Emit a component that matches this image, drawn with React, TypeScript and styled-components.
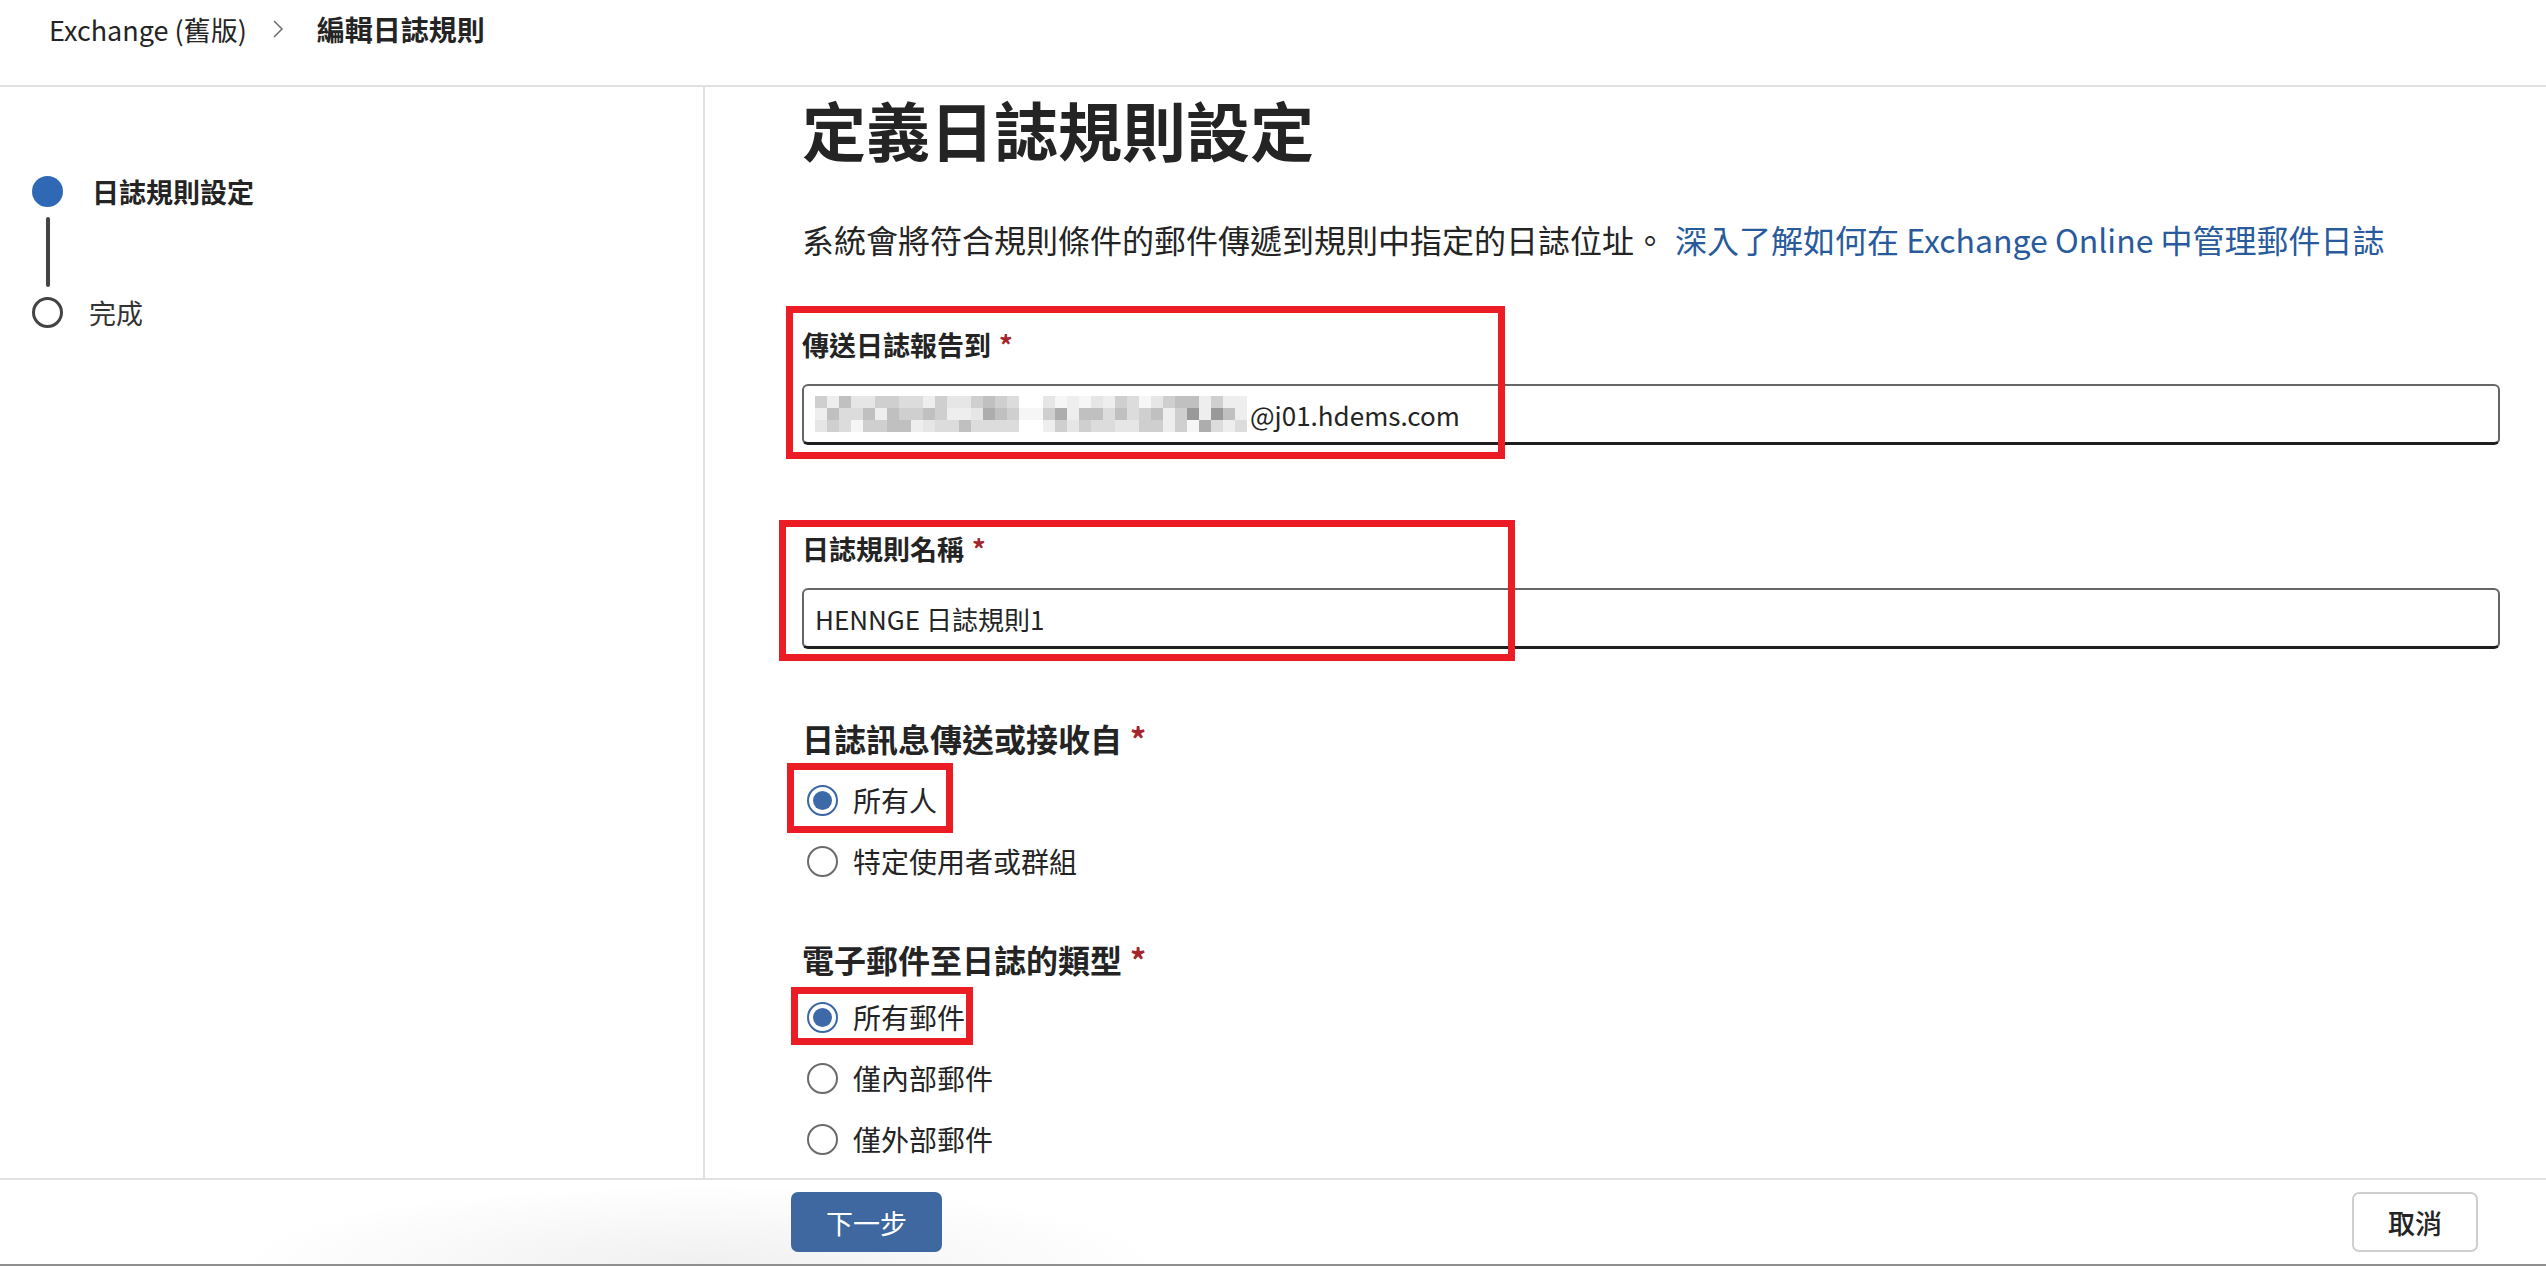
import React from 'react'
import styled, { createGlobalStyle } from 'styled-components'

const GlobalStyle = createGlobalStyle`
  html, body {
    margin: 0;
    padding: 0;
    background: #fff;
  }
  body {
    font-family: "Noto Sans CJK TC", "Noto Sans", sans-serif;
    color: #242424;
    overflow: hidden;
  }
  * {
    box-sizing: border-box;
  }
`

const Page = styled.div`
  height: 100vh;
  display: flex;
  flex-direction: column;
  border-bottom: 2px solid #8f8f8f;
`

/* ---------- header ---------- */

const Header = styled.header`
  height: 87px;
  flex-shrink: 0;
  border-bottom: 2px solid #e1e1e1;
  padding-left: 49px;
`

const Crumbs = styled.nav`
  height: 58px;
  display: flex;
  align-items: center;
  font-size: 27px;
`

const Crumb = styled.span<{ $current?: boolean }>`
  font-weight: ${({ $current }) => ($current ? 700 : 400)};
  font-size: ${({ $current }) => ($current ? '28px' : 'inherit')};
  color: #242424;
`

const Chevron = styled.svg`
  margin: 0 33px 0 25px;
  width: 12px;
  height: 20px;
`

/* ---------- wizard steps ---------- */

const Body = styled.div`
  flex: 1;
  display: flex;
  min-height: 0;
`

const Sidebar = styled.aside`
  width: 705px;
  flex-shrink: 0;
  border-right: 2px solid #e1e1e1;
  padding: 89px 0 0 32px;
  display: flex;
  flex-direction: column;
`

const Step = styled.div`
  display: flex;
  align-items: center;
  height: 31px;
`

const StepDot = styled.span<{ $active?: boolean }>`
  width: 31px;
  height: 31px;
  border-radius: 50%;
  flex-shrink: 0;
  background: ${({ $active }) => ($active ? '#2f68b5' : '#fff')};
  border: ${({ $active }) => ($active ? 'none' : '3.5px solid #444')};
`

const StepLabel = styled.span<{ $active?: boolean }>`
  margin-left: ${({ $active }) => ($active ? '29px' : '26px')};
  font-size: 27px;
  font-weight: ${({ $active }) => ($active ? 700 : 400)};
  color: ${({ $active }) => ($active ? '#242424' : '#333')};
`

const StepLine = styled.span`
  width: 4px;
  height: 70px;
  margin: 10px 0 10px 13.5px;
  border-radius: 2px;
  background: #444;
`

/* ---------- form ---------- */

const Main = styled.main`
  flex: 1;
  overflow: hidden;
  padding: 0 46px 0 97px;
`

const Title = styled.h1`
  margin: 0;
  font-size: 64px;
  line-height: 82px;
  font-weight: 700;
`

const Intro = styled.p`
  margin: 48px 0 0;
  font-size: 32px;
  line-height: 44px;
`

const Link = styled.a`
  margin-left: 9px;
  color: #285a9c;
  text-decoration: none;
`

const Field = styled.div<{ $gap: number }>`
  position: relative;
  margin-top: ${({ $gap }) => $gap}px;
`

const Label = styled.label`
  display: block;
  font-size: 27px;
  line-height: 40px;
  font-weight: 700;
`

const Required = styled.span`
  margin-left: 8px;
  color: #a4262c;
`

const Input = styled.div`
  margin-top: 19px;
  height: 61px;
  display: flex;
  align-items: center;
  padding-left: 11px;
  border: 2px solid #666;
  border-bottom: 3px solid #1f1f1f;
  border-radius: 6px;
  font-size: 26px;
  color: #242424;
`

const Mosaic = styled.svg`
  flex-shrink: 0;
  margin-right: 3px;
`

const GroupTitle = styled.div`
  font-size: 32px;
  line-height: 44px;
  font-weight: 700;
`

const Options = styled.div<{ $top: number }>`
  margin-top: ${({ $top }) => $top}px;
  display: flex;
  flex-direction: column;
  gap: 11px;
`

const Option = styled.label`
  position: relative;
  display: flex;
  align-items: center;
  height: 50px;
  padding-left: 5px;
  font-size: 28px;
`

const RadioMark = styled.span<{ $checked?: boolean }>`
  width: 31px;
  height: 31px;
  border-radius: 50%;
  flex-shrink: 0;
  margin-right: 15px;
  border: 2.5px solid ${({ $checked }) => ($checked ? '#3a66a8' : '#6b6b6b')};
  display: flex;
  align-items: center;
  justify-content: center;

  &::after {
    content: '';
    width: 19px;
    height: 19px;
    border-radius: 50%;
    background: #3e69a8;
    display: ${({ $checked }) => ($checked ? 'block' : 'none')};
  }
`

/* red callout frame drawn over a field */
const Callout = styled.span<{ $l: number; $t: number; $w: number; $h: number }>`
  position: absolute;
  left: ${({ $l }) => $l}px;
  top: ${({ $t }) => $t}px;
  width: ${({ $w }) => $w}px;
  height: ${({ $h }) => $h}px;
  border: 7px solid #ec1c24;
  pointer-events: none;
`

/* ---------- footer ---------- */

const Footer = styled.footer`
  height: 86px;
  flex-shrink: 0;
  border-top: 2px solid #e1e1e1;
  display: flex;
  align-items: center;
  justify-content: space-between;
  padding: 0 68px 0 791px;
  background: radial-gradient(ellipse 460px 80px at 700px 100%, rgba(0, 0, 0, 0.06), rgba(0, 0, 0, 0));
`

const Button = styled.button<{ $primary?: boolean }>`
  height: 60px;
  padding: 0 ${({ $primary }) => ($primary ? '33px' : '34px')};
  border-radius: 7px;
  font-family: inherit;
  font-size: 27px;
  border: 2px solid ${({ $primary }) => ($primary ? '#3f68a1' : '#cfcfcf')};
  background: ${({ $primary }) => ($primary ? '#3f68a1' : '#fff')};
  color: ${({ $primary }) => ($primary ? '#fff' : '#242424')};
  font-weight: ${({ $primary }) => ($primary ? 400 : 500)};
`

// blurred mailbox name in front of the domain
const MASK_COLS = 36
const MASK_ROWS = 3
const CELL = 12
const SHADES = ['#f6f6f6', '#eeeeee', '#e6e6e6', '#dcdcdc', '#cfcfcf', '#c0c0c0', '#adadad', '#999999', '#8a8a8a']

const maskCells = (() => {
  let seed = 11
  const rand = () => {
    seed = (seed * 9301 + 49297) % 233280
    return seed / 233280
  }
  const cells: { x: number; y: number; fill: string }[] = []
  for (let c = 0; c < MASK_COLS; c++) {
    for (let r = 0; r < MASK_ROWS; r++) {
      const gap = c === 17 || c === 18
      const bias = r === 1 ? 2.2 : r === 0 ? 0.6 : 1.2
      let idx = Math.floor(rand() * 5 + rand() * bias * 1.6)
      if (gap) idx = r === 1 ? 0 : -1
      if (idx < 0) continue
      cells.push({ x: c * CELL, y: r * CELL, fill: SHADES[Math.min(idx, SHADES.length - 1)] })
    }
  }
  return cells
})()

const MaskedName = () => (
  <Mosaic width={MASK_COLS * CELL} height={MASK_ROWS * CELL} viewBox={`0 0 ${MASK_COLS * CELL} ${MASK_ROWS * CELL}`}>
    {maskCells.map((cell, i) => (
      <rect key={i} x={cell.x} y={cell.y} width={CELL} height={CELL} fill={cell.fill} />
    ))}
  </Mosaic>
)

const senders = ['所有人', '特定使用者或群組']
const scopes = ['所有郵件', '僅內部郵件', '僅外部郵件']

export default function App() {
  return (
    <>
      <GlobalStyle />
      <Page>
        <Header>
          <Crumbs>
            <Crumb>Exchange (舊版)</Crumb>
            <Chevron viewBox="0 0 12 20">
              <path d="M2 2 L10 10 L2 18" fill="none" stroke="#6d6d6d" strokeWidth="1.5" />
            </Chevron>
            <Crumb $current>編輯日誌規則</Crumb>
          </Crumbs>
        </Header>

        <Body>
          <Sidebar>
            <Step>
              <StepDot $active />
              <StepLabel $active>日誌規則設定</StepLabel>
            </Step>
            <StepLine />
            <Step>
              <StepDot />
              <StepLabel>完成</StepLabel>
            </Step>
          </Sidebar>

          <Main>
            <Title>定義日誌規則設定</Title>
            <Intro>
              系統會將符合規則條件的郵件傳遞到規則中指定的日誌位址。
              <Link href="#">深入了解如何在 Exchange Online 中管理郵件日誌</Link>
            </Intro>

            <Field $gap={64}>
              <Label>
                傳送日誌報告到<Required>*</Required>
              </Label>
              <Input>
                <MaskedName />
                @j01.hdems.com
              </Input>
              <Callout $l={-16} $t={-19} $w={719} $h={153} />
            </Field>

            <Field $gap={84}>
              <Label>
                日誌規則名稱<Required>*</Required>
              </Label>
              <Input>HENNGE 日誌規則1</Input>
              <Callout $l={-23} $t={-9} $w={736} $h={141} />
            </Field>

            <Field $gap={67}>
              <GroupTitle>
                日誌訊息傳送或接收自<Required>*</Required>
              </GroupTitle>
              <Options $top={15}>
                {senders.map((label, i) => (
                  <Option key={label}>
                    <RadioMark $checked={i === 0} />
                    {label}
                    {i === 0 && <Callout $l={-15} $t={-12} $w={166} $h={70} />}
                  </Option>
                ))}
              </Options>
            </Field>

            <Field $gap={51}>
              <GroupTitle>
                電子郵件至日誌的類型<Required>*</Required>
              </GroupTitle>
              <Options $top={11}>
                {scopes.map((label, i) => (
                  <Option key={label}>
                    <RadioMark $checked={i === 0} />
                    {label}
                    {i === 0 && <Callout $l={-11} $t={-5} $w={182} $h={58} />}
                  </Option>
                ))}
              </Options>
            </Field>
          </Main>
        </Body>

        <Footer>
          <Button $primary>下一步</Button>
          <Button>取消</Button>
        </Footer>
      </Page>
    </>
  )
}
